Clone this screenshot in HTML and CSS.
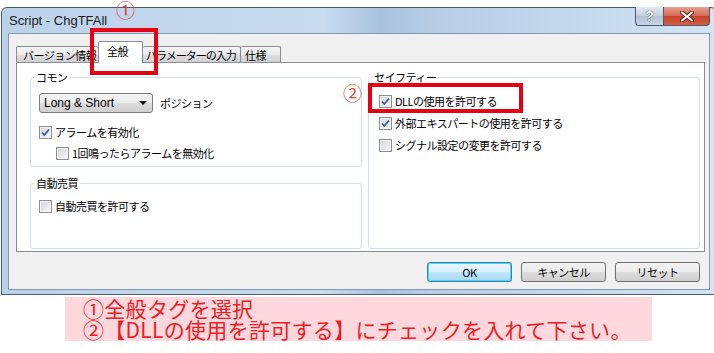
FILE: index.html
```html
<!DOCTYPE html>
<html lang="ja">
<head>
    <meta charset="UTF-8">
    <meta name="viewport" content="width=device-width, initial-scale=1.0">
    <link rel="stylesheet" href="styles.css">
    <title>Script - ChgTFAll</title>
</head>
<body>
    <div class="window">
        <!-- Title bar -->
        <div class="titlebar">
            <span class="title">Script - ChgTFAll</span>
            <div class="caption-buttons">
                <span class="cap cap-help">?</span>
                <span class="cap cap-close">
                    <svg width="14" height="11" viewBox="0 0 14 11">
                        <path d="M2 1.5 L12 9.5 M12 1.5 L2 9.5" stroke="#5a1a12" stroke-width="4" stroke-linecap="round"/>
                        <path d="M2 1.5 L12 9.5 M12 1.5 L2 9.5" stroke="#fff" stroke-width="2.2" stroke-linecap="round"/>
                    </svg>
                </span>
            </div>
        </div>

        <div class="client">
            <!-- Tabs -->
            <div class="tabs">
                <span class="tab tab-version">バージョン情報</span>
                <span class="tab tab-general active">全般</span>
                <span class="tab tab-params">パラメーターの入力</span>
                <span class="tab tab-spec">仕様</span>
            </div>

            <!-- Tab panel -->
            <div class="panel">
                <div class="col">
                    <fieldset class="group group-common">
                        <legend>コモン</legend>
                        <div class="group-body">
                            <div class="row">
                                <div class="combo">Long &amp; Short<span class="arrow"></span></div>
                                <span>ポジション</span>
                            </div>
                            <div class="check checked first">
                                <span class="box"><svg width="11" height="11" viewBox="0 0 11 11"><path d="M2 5.5 L4.3 8 L9 2.5" fill="none" stroke="#3e5a8c" stroke-width="1.8"/></svg></span>
                                アラームを有効化
                            </div>
                            <div class="check indent">
                                <span class="box"></span>
                                1回鳴ったらアラームを無効化
                            </div>
                        </div>
                    </fieldset>

                    <fieldset class="group group-auto">
                        <legend>自動売買</legend>
                        <div class="group-body">
                            <div class="check">
                                <span class="box"></span>
                                自動売買を許可する
                            </div>
                        </div>
                    </fieldset>
                </div>

                <fieldset class="group group-safety">
                    <legend>セイフティー</legend>
                    <div class="group-body">
                        <div class="check checked">
                            <span class="box"><svg width="11" height="11" viewBox="0 0 11 11"><path d="M2 5.5 L4.3 8 L9 2.5" fill="none" stroke="#3e5a8c" stroke-width="1.8"/></svg></span>
                            DLLの使用を許可する
                        </div>
                        <div class="check checked">
                            <span class="box"><svg width="11" height="11" viewBox="0 0 11 11"><path d="M2 5.5 L4.3 8 L9 2.5" fill="none" stroke="#3e5a8c" stroke-width="1.8"/></svg></span>
                            外部エキスパートの使用を許可する
                        </div>
                        <div class="check">
                            <span class="box"></span>
                            シグナル設定の変更を許可する
                        </div>
                    </div>
                </fieldset>
            </div>

            <!-- Dialog buttons -->
            <div class="actions">
                <button class="btn default">OK</button>
                <button class="btn">キャンセル</button>
                <button class="btn">リセット</button>
            </div>
        </div>
    </div>

    <!-- Note below the dialog -->
    <div class="note">
        <div>①全般タグを選択</div>
        <div>②【DLLの使用を許可する】にチェックを入れて下さい。</div>
    </div>

    <!-- Red annotations over the screenshot -->
    <div class="mark mark-tab"></div>
    <span class="num num-1">①</span>
    <div class="mark mark-dll"></div>
    <span class="num num-2">②</span>
</body>
</html>
```

FILE: styles.css
```css
* {
    box-sizing: border-box;
}

body {
    margin: 0;
    width: 714px;
    height: 353px;
    overflow: hidden;
    position: relative;
    background-color: #fff;
    font-family: "Noto Sans CJK JP", sans-serif;
}

/* Window frame */
.window {
    margin: 7px 0 0 1px;
    width: 716px;
    height: 288px;
    padding: 0 6px 4px 6px;
    display: flex;
    flex-direction: column;
    border: 1px solid #4a5c70;
    border-radius: 6px 6px 0 0;
    background: linear-gradient(90deg, #bcd2e9 0%, #c8dbef 45%, #a9c2de 53%, #b7cde6 60%, #d2e4f5 100%);
}

.titlebar {
    height: 25px;
    display: flex;
    justify-content: space-between;
    align-items: flex-start;
}

.title {
    margin: 5px 0 0 1px;
    font-family: "Liberation Sans", sans-serif;
    font-size: 13px;
    color: #1a1a1a;
}

.caption-buttons {
    display: flex;
    margin-top: -1px;
}

.cap {
    height: 19px;
    display: flex;
    align-items: center;
    justify-content: center;
    border: 1px solid #4b5a6c;
    border-top: none;
}

.cap-help {
    width: 28px;
    border-right: none;
    border-radius: 0 0 0 4px;
    background: linear-gradient(#dfe8f2, #c3d0de 50%, #b2c1d2 51%, #c7d4e2);
    font-family: "Liberation Sans", sans-serif;
    font-size: 14px;
    font-weight: bold;
    color: #fff;
    text-shadow: 0 0 1px #33465c, 0 0 1px #33465c;
}

.cap-close {
    width: 47px;
    border-radius: 0 0 4px 0;
    background: linear-gradient(#e8a190, #d66a57 50%, #c7402b 51%, #d65f45);
}

/* Client area */
.client {
    flex: 1;
    display: flex;
    flex-direction: column;
    padding: 7px 4px 0 7px;
    background-color: #f0f0f0;
    border: 1px solid #8397ae;
    font-size: 11px;
    letter-spacing: -0.5px;
    color: #000;
}

.tabs {
    height: 21px;
    display: flex;
    align-items: flex-end;
}

.tab {
    height: 16px;
    display: flex;
    align-items: center;
    padding-left: 6px;
    white-space: nowrap;
    overflow: hidden;
    border: 1px solid #898c95;
    border-bottom: none;
    border-radius: 2px 2px 0 0;
    background: linear-gradient(#f3f3f3, #ebebeb 50%, #dddddd 51%, #d2d2d2);
}

.tab-version {
    width: 82px;
    border-right: none;
}

.tab-general {
    width: 45px;
    padding-left: 8px;
}

.tab-params {
    width: 98px;
    padding-left: 3px;
    letter-spacing: -1px;
    border-left: none;
}

.tab-spec {
    width: 40px;
    padding-left: 4px;
    border-left: none;
}

.tab.active {
    height: 22px;
    margin-bottom: -1px;
    position: relative;
    z-index: 1;
    padding-bottom: 3px;
    background: #fff;
}

.panel {
    height: 190px;
    display: grid;
    grid-template-columns: 332px 332px;
    column-gap: 6px;
    padding: 7px 0 0 13px;
    background-color: #fff;
    border: 1px solid #898c95;
}

.col {
    display: flex;
    flex-direction: column;
    gap: 9px;
}

/* Group boxes */
.group {
    margin: 0;
    padding: 0;
    min-width: 0;
    border: 1px solid #d5dfe5;
    border-radius: 3px;
}

.group legend {
    margin-left: 3px;
    padding: 0 2px;
    line-height: 14px;
    font-size: 11px;
}

.group-common {
    height: 97px;
}

.group-auto {
    height: 73px;
}

.group-safety {
    height: 179px;
}

.group-body {
    display: flex;
    flex-direction: column;
    align-items: flex-start;
}

.group-common .group-body {
    padding: 9px 0 0 8px;
}

.group-auto .group-body {
    padding: 10px 0 0 8px;
}

.group-safety .group-body {
    padding: 11px 0 0 10px;
    gap: 9px;
}

.row {
    display: flex;
    align-items: center;
    gap: 7px;
}

.combo {
    width: 114px;
    height: 20px;
    display: flex;
    align-items: center;
    justify-content: space-between;
    padding: 0 5px 0 4px;
    font-family: "Liberation Sans", sans-serif;
    font-size: 12px;
    letter-spacing: 0;
    border: 1px solid #7a7a7a;
    border-radius: 3px;
    background: linear-gradient(#f2f2f2, #ebebeb 50%, #dddddd 51%, #cfcfcf);
}

.arrow {
    width: 0;
    height: 0;
    border-left: 4px solid transparent;
    border-right: 4px solid transparent;
    border-top: 4px solid #000;
}

/* Checkboxes */
.check {
    height: 13px;
    display: flex;
    align-items: center;
    gap: 3px;
    line-height: 13px;
    white-space: nowrap;
}

.check.first {
    margin-top: 13px;
}

.check.indent {
    margin: 8px 0 0 17px;
}

.box {
    width: 13px;
    height: 13px;
    flex-shrink: 0;
    display: flex;
    align-items: center;
    justify-content: center;
    border: 1px solid #8e8f8f;
    background: linear-gradient(135deg, #d2d6dc, #f7f7f7);
    box-shadow: inset 0 0 0 1px #f4f4f4;
}

/* Dialog buttons */
.actions {
    display: flex;
    justify-content: flex-end;
    gap: 9px;
    margin-top: 10px;
    padding-right: 5px;
}

.btn {
    width: 85px;
    height: 20px;
    padding: 0;
    font-family: "Noto Sans CJK JP", sans-serif;
    font-size: 11px;
    letter-spacing: -0.5px;
    color: #000;
    border: 1px solid #707070;
    border-radius: 3px;
    background: linear-gradient(#f2f2f2, #ebebeb 50%, #dddddd 51%, #cfcfcf);
}

.btn.default {
    border-color: #3c7fb1;
    box-shadow: inset 0 0 0 1px #48d9f9;
    background: linear-gradient(#eaf6fd, #d9f0fc 50%, #bee6fd 51%, #a7d9f5);
}

/* Note */
.note {
    margin: 2px 0 0 65px;
    width: 587px;
    height: 44px;
    padding: 1px 0 0 18px;
    background-color: #ffd8dd;
    color: #ec1c24;
    font-size: 21px;
    line-height: 21px;
    letter-spacing: 0.3px;
}

/* Annotations */
.mark {
    position: absolute;
    border: 4px solid #e60012;
}

.mark-tab {
    left: 90px;
    top: 28px;
    width: 68px;
    height: 47px;
}

.mark-dll {
    left: 368px;
    top: 83px;
    width: 155px;
    height: 30px;
}

.num {
    position: absolute;
    font-size: 19px;
    line-height: 20px;
    color: #e0403a;
}

.num-1 {
    left: 116px;
    top: 0;
}

.num-2 {
    left: 343px;
    top: 83px;
}
```
